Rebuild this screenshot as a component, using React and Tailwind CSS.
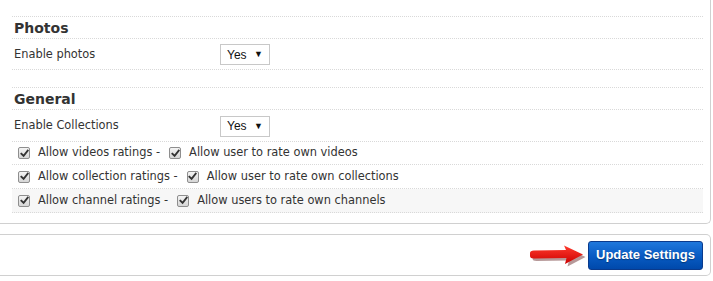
const rowLine = 'border-b border-dotted border-[#d9d9d9]';

function Select() {
  return (
    <div className="flex h-[21px] w-[50px] items-center justify-between border border-[#c8c8c8] bg-white pl-[6px] pr-[6px] font-['Liberation_Sans',Arial,sans-serif] text-[12px] text-[#111]">
      <span>Yes</span>
      <span className="text-[9px] leading-none">▼</span>
    </div>
  );
}

function Check() {
  return (
    <span className="flex h-[12px] w-[12px] shrink-0 items-center justify-center rounded-[2px] border border-[#8e8e8e] bg-gradient-to-b from-[#f4f4f4] to-[#d6d6d6]">
      <svg viewBox="0 0 10 10" className="h-[9px] w-[9px]">
        <path d="M1.5 5.2 L4 7.6 L8.6 1.8" fill="none" stroke="#333" strokeWidth="2" strokeLinecap="square" />
      </svg>
    </span>
  );
}

function RatingRow({ left, right, shade, h }) {
  return (
    <div className={`flex items-center ${h} ${rowLine} ${shade ? 'bg-[#f7f7f7]' : ''} pl-[6px]`}>
      <Check />
      <span className="ml-[8px]">{left}</span>
      <span className="ml-[9px]">
        <Check />
      </span>
      <span className="ml-[8px]">{right}</span>
    </div>
  );
}

export default function App() {
  return (
    <div className="min-h-[281px] bg-white pr-[2px] font-['DejaVu_Sans',Verdana,sans-serif] text-[11.4px] text-[#333]">
      {/* Settings card */}
      <div className="rounded-br-[5px] border-r border-b border-[#d0d0d0] pl-[12px] pr-[7px] pb-[10px]">
        <div className={`h-[17px] ${rowLine}`} />
        <div className={`flex h-[22px] items-center pl-[2px] pt-[1px] text-[14px] font-bold ${rowLine}`}>Photos</div>
        <div className={`flex h-[31px] items-center pt-[1px] ${rowLine}`}>
          <span className="w-[208px] pl-[2px]">Enable photos</span>
          <Select />
        </div>
        <div className={`h-[18px] ${rowLine}`} />
        <div className={`flex h-[22px] items-center pl-[2px] pt-[1px] text-[14px] font-bold ${rowLine}`}>General</div>
        <div className={`flex h-[32px] items-center pt-[1px] ${rowLine}`}>
          <span className="w-[208px] pl-[2px]">Enable Collections</span>
          <Select />
        </div>
        <RatingRow h="h-[23px]" left="Allow videos ratings -" right="Allow user to rate own videos" />
        <RatingRow h="h-[24px]" left="Allow collection ratings -" right="Allow user to rate own collections" />
        <RatingRow h="h-[24px]" shade left="Allow channel ratings -" right="Allow users to rate own channels" />
      </div>

      {/* Actions card */}
      <div className="mt-[10px] flex h-[42px] items-center justify-end gap-[2px] rounded-r-[5px] border-y border-r border-[#d0d0d0] pr-[7px]">
        <svg width="58" height="22" viewBox="0 0 58 22" className="mt-[1px]">
          <defs>
            <linearGradient id="ar" x1="0" y1="0" x2="0" y2="1">
              <stop offset="0" stopColor="#ff3b2e" />
              <stop offset="1" stopColor="#cc0000" />
            </linearGradient>
          </defs>
          <path d="M3 9 Q3 6.5 7 6.5 L39 6 L37 1 L56 10.5 L38 20 L39.5 14 L7 14.5 Q3 14.5 3 12 Z" fill="#4a0000" opacity="0.4" transform="translate(1.5 1.5)" />
          <path d="M2 8 Q2 5.5 6 5.5 L38 5 L36 0.5 L55 9.5 L37 19 L38.5 13 L6 13.5 Q2 13.5 2 11 Z" fill="url(#ar)" />
        </svg>
        <button className="h-[29px] rounded-[3px] border border-[#0a3a8c] bg-gradient-to-b from-[#1f78dc] via-[#0a5cc4] to-[#0049ab] px-[7px] font-['Liberation_Sans',Arial,sans-serif] text-[13px] font-bold text-white [text-shadow:0_1px_1px_rgba(0,0,0,0.35)]">
          Update Settings
        </button>
      </div>
    </div>
  );
}
